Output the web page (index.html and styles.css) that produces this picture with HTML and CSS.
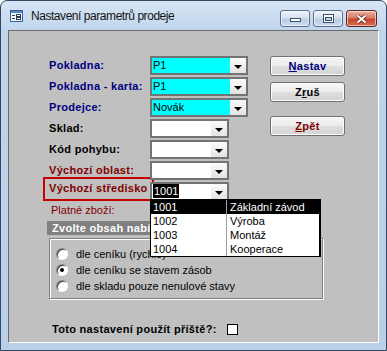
FILE: index.html
```html
<!DOCTYPE html>
<html>
<head>
    <meta charset="utf-8">
    <link rel="stylesheet" href="styles.css">
</head>
<body>
    <div class="window">
        <div class="titlebar">
            <svg class="app-icon" width="13" height="12" viewBox="0 0 13 12">
                <rect x="0.5" y="0.5" width="12" height="11" fill="#f4f8fd" stroke="#3a5f9a"/>
                <rect x="1" y="1" width="11" height="2" fill="#5d84c2"/>
                <path d="M2 5.5h3M2 8.5h3" stroke="#2d3b55"/>
                <rect x="6.5" y="4.5" width="4" height="2" fill="none" stroke="#2d3b55"/>
                <rect x="6.5" y="7.5" width="4" height="2" fill="none" stroke="#2d3b55"/>
            </svg>
            <span class="title">Nastavení parametrů prodeje</span>
            <div class="caption-buttons">
                <div class="cap-btn min">
                    <svg width="11" height="5" viewBox="0 0 11 5"><rect x="0.5" y="0.5" width="10" height="3" fill="#fff" stroke="#3b4f6d"/></svg>
                </div>
                <div class="cap-btn max">
                    <svg width="11" height="9" viewBox="0 0 11 9"><rect x="0.5" y="0.5" width="10" height="8" fill="#fff" stroke="#3b4f6d"/><rect x="2.5" y="3.5" width="6" height="3" fill="#c3d3e8" stroke="#3b4f6d"/></svg>
                </div>
                <div class="cap-btn close">
                    <svg width="13" height="10" viewBox="0 0 13 10">
                        <path d="M2.5 1.5L10.5 8.5M10.5 1.5L2.5 8.5" stroke="#5e2216" stroke-width="3.6"/>
                        <path d="M2.5 1.5L10.5 8.5M10.5 1.5L2.5 8.5" stroke="#fff" stroke-width="2"/>
                    </svg>
                </div>
            </div>
        </div>

        <div class="client">
            <div class="top">
                <div class="fields">
                    <label class="lbl blue">Pokladna:</label>
                    <div class="combo wide cyan"><span class="value">P1</span><span class="drop"></span></div>

                    <label class="lbl blue">Pokladna - karta:</label>
                    <div class="combo wide cyan"><span class="value">P1</span><span class="drop"></span></div>

                    <label class="lbl blue">Prodejce:</label>
                    <div class="combo wide cyan"><span class="value">Novák</span><span class="drop"></span></div>

                    <label class="lbl">Sklad:</label>
                    <div class="combo"><span class="value"></span><span class="drop"></span></div>

                    <label class="lbl">Kód pohybu:</label>
                    <div class="combo"><span class="value"></span><span class="drop"></span></div>

                    <label class="lbl red">Výchozí oblast:</label>
                    <div class="combo"><span class="value"></span><span class="drop"></span></div>

                    <label class="lbl red focus">Výchozí středisko</label>
                    <div class="combo open">
                        <span class="value"><span class="selected">1001</span></span><span class="drop"></span>
                        <div class="list">
                            <div class="item active"><span class="code">1001</span><span class="name">Základní závod</span></div>
                            <div class="item"><span class="code">1002</span><span class="name">Výroba</span></div>
                            <div class="item"><span class="code">1003</span><span class="name">Montáž</span></div>
                            <div class="item"><span class="code">1004</span><span class="name">Kooperace</span></div>
                        </div>
                    </div>
                </div>

                <div class="buttons">
                    <div class="btn blue"><u>N</u>astav</div>
                    <div class="btn"><span>Z<u>r</u>uš</span></div>
                    <div class="btn red gap"><u>Z</u>pět</div>
                </div>
            </div>

            <div class="valid">Platné zboží:</div>
            <div class="section-head">Zvolte obsah nabídky zboží</div>
            <div class="group">
                <div class="radio-row"><span class="radio"></span>dle ceníku (rychlé)</div>
                <div class="radio-row"><span class="radio checked"></span>dle ceníku se stavem zásob</div>
                <div class="radio-row"><span class="radio"></span>dle skladu pouze nenulové stavy</div>
            </div>

            <div class="remember">
                <span>Toto nastavení použít příště?:</span>
                <span class="check"></span>
            </div>
        </div>
    </div>
</body>
</html>
```

FILE: styles.css
```css
/* Window frame */
body {
    margin: 0;
    background: #ffffff;
}

.window {
    width: 387px;
    height: 351px;
    box-sizing: border-box;
    border: 1px solid #34475e;
    border-radius: 7px 7px 0 0;
    background: linear-gradient(#d7e5f5, #c0d5ec 30px, #b9d0e9);
    display: flex;
    flex-direction: column;
    font-family: "Liberation Sans", Arial, sans-serif;
}

/* Title bar */
.titlebar {
    height: 29px;
    display: flex;
    align-items: center;
    padding-left: 9px;
}

.app-icon {
    flex: none;
}

.title {
    margin-left: 8px;
    font-family: "Liberation Sans", Arial, sans-serif;
    font-size: 12px;
    letter-spacing: -0.45px;
    color: #141414;
    flex: 1;
}

.caption-buttons {
    align-self: flex-start;
    margin: 9px 9px 0 0;
    display: flex;
    gap: 3px;
}

.cap-btn {
    width: 30px;
    height: 17px;
    box-sizing: border-box;
    border: 1px solid #5b6f8d;
    border-radius: 3px;
    background: linear-gradient(#eef3fa, #d6e1ef 45%, #bccde3 55%, #cbdbee);
    box-shadow: inset 0 0 0 1px rgba(255, 255, 255, 0.55);
    display: flex;
    align-items: center;
    justify-content: center;
}

.cap-btn.min {
    align-items: flex-end;
    padding-bottom: 3px;
}

.cap-btn.close {
    width: 31px;
    border-color: #5c261c;
    background: linear-gradient(#ecb0a2, #d97b66 45%, #c6472f 55%, #d86a50);
}

/* Client area */
.client {
    flex: 1;
    margin: 0 7px 7px 7px;
    border: 1px solid;
    border-color: #6d6d6d #ffffff #ffffff #6d6d6d;
    background: #c0c0c0;
    padding: 25px 0 0 36px;
    font-size: 11px;
}

.top {
    display: flex;
}

.fields {
    display: grid;
    grid-template-columns: 105px auto;
    grid-auto-rows: 19px;
    row-gap: 2px;
    align-items: center;
}

.lbl {
    padding-left: 4px;
    font-weight: bold;
    letter-spacing: 0.3px;
    color: #000000;
    white-space: nowrap;
    height: 19px;
    line-height: 19px;
}

.lbl.blue {
    color: #000080;
}

.lbl.red {
    color: #800000;
}

.lbl.focus {
    outline: 2px solid #c80000;
    outline-offset: 0;
    height: 20px;
    margin-top: -3px;
    margin-right: -2px;
    align-self: start;
}

/* Combo boxes */
.combo {
    position: relative;
    width: 79px;
    height: 19px;
    box-sizing: border-box;
    border: 2px solid #737373;
    background: #ffffff;
    display: flex;
}

.combo.wide {
    width: 98px;
}

.combo.cyan {
    background: #00ffff;
}

.combo .value {
    flex: 1;
    padding-left: 1px;
    line-height: 15px;
    color: #000000;
}

.combo .selected {
    background: #000000;
    color: #ffffff;
    padding: 0 1px;
    display: inline-block;
    line-height: 14px;
}

.combo .drop {
    width: 16px;
    background: linear-gradient(#fbfbfb, #e3e3e3);
    display: flex;
    align-items: flex-end;
    justify-content: center;
    padding-bottom: 4px;
    box-sizing: border-box;
}

.combo .drop::after {
    content: "";
    border-top: 4px solid #000000;
    border-left: 4px solid transparent;
    border-right: 4px solid transparent;
}

/* Open list of the combo */
.list {
    position: absolute;
    left: -2px;
    top: 100%;
    width: 171px;
    box-sizing: border-box;
    border: 1px solid #000000;
    border-right-width: 2px;
    background: #ffffff;
    z-index: 2;
}

.item {
    display: flex;
    height: 14px;
    line-height: 14px;
}

.item .code {
    width: 76px;
    padding-left: 2px;
    box-sizing: border-box;
    border-right: 1px solid #a0a0a0;
}

.item .name {
    padding-left: 3px;
}

.item.active {
    background: #000000;
    color: #ffffff;
}

/* Push buttons */
.buttons {
    margin-left: 22px;
    display: flex;
    flex-direction: column;
    gap: 6px;
}

.btn {
    width: 75px;
    height: 20px;
    box-sizing: border-box;
    border: 1px solid #707070;
    border-radius: 3px;
    background: linear-gradient(#f6f6f6, #ececec 50%, #dedede 51%, #d4d4d4);
    box-shadow: inset 0 0 0 1px #fcfcfc;
    text-align: center;
    line-height: 18px;
    font-weight: bold;
    letter-spacing: 0.3px;
    color: #000000;
}

.btn.blue {
    color: #000080;
}

.btn.red {
    color: #800000;
}

.btn.gap {
    margin-top: 8px;
}

/* Lower part */
.valid {
    margin: 2px 0 0 6px;
    height: 14px;
    line-height: 14px;
    color: #800000;
}

.section-head {
    margin: 4px 0 0 2px;
    width: 265px;
    height: 14px;
    line-height: 14px;
    padding-left: 5px;
    box-sizing: border-box;
    background: #808080;
    color: #ffffff;
    font-weight: bold;
    letter-spacing: 0.3px;
}

.group {
    margin: 3px 0 0 4px;
    width: 274px;
    height: 61px;
    box-sizing: border-box;
    border: 1px solid #808080;
    box-shadow: inset 1px 1px #ffffff, 1px 1px #ffffff;
    padding: 7px 0 0 6px;
}

.radio-row {
    height: 16px;
    display: flex;
    align-items: center;
    gap: 8px;
}

.radio {
    width: 12px;
    height: 12px;
    box-sizing: border-box;
    border-radius: 50%;
    border: 1px solid;
    border-color: #808080 #ffffff #ffffff #808080;
    background: #ffffff;
    box-shadow: inset 1px 1px #404040;
    display: flex;
    align-items: center;
    justify-content: center;
}

.radio.checked::after {
    content: "";
    width: 4px;
    height: 4px;
    border-radius: 50%;
    background: #000000;
}

.remember {
    margin: 24px 0 0 7px;
    height: 12px;
    display: flex;
    align-items: center;
    gap: 10px;
    font-weight: bold;
    letter-spacing: 0.3px;
}

.check {
    width: 11px;
    height: 11px;
    box-sizing: border-box;
    border: 1px solid #000000;
    background: #ffffff;
}
```
